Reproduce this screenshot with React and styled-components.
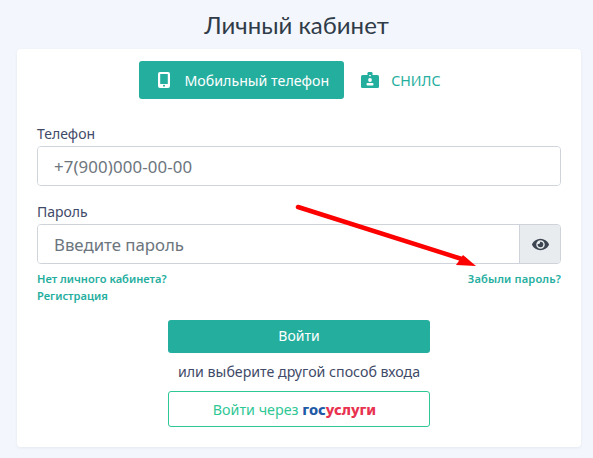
import React from "react";
import styled, { createGlobalStyle } from "styled-components";
import { FaEye } from "react-icons/fa";

const GlobalStyle = createGlobalStyle`
  html, body {
    margin: 0;
    padding: 0;
    background: #f3f6fc;
    font-family: "Noto Sans", "Open Sans", sans-serif;
  }
`;

const Page = styled.div`
  position: relative;
  width: 593px;
  height: 458px;
  overflow: hidden;
  padding: 0 12px 0 17px;
  box-sizing: border-box;
`;

const Title = styled.h1`
  margin: 0;
  height: 49px;
  padding-right: 5px;
  line-height: 49px;
  text-align: center;
  font-family: Lato, sans-serif;
  font-size: 24px;
  font-weight: 400;
  color: #2f3b48;
`;

const Card = styled.div`
  height: 398px;
  background: #fff;
  border-radius: 4px;
  box-shadow: 0 1px 3px rgba(60, 80, 120, 0.08);
  padding: 12px 20px 0;
  box-sizing: border-box;
`;

const Tabs = styled.div`
  display: flex;
  justify-content: center;
  margin-bottom: 25px;
`;

const Tab = styled.div`
  display: flex;
  align-items: center;
  height: 38px;
  padding: ${(p) => (p.$active ? "0 15px 0 19px" : "0 19px 0 17px")};
  gap: ${(p) => (p.$active ? "15px" : "12px")};
  border-radius: 3px;
  font-size: 14.2px;
  background: ${(p) => (p.$active ? "#24ae9e" : "transparent")};
  color: ${(p) => (p.$active ? "#fff" : "#24ae9e")};
`;

const Field = styled.div`
  margin-bottom: 16px;
`;

const Label = styled.div`
  font-size: 14px;
  line-height: 20px;
  margin-bottom: 2px;
  color: #3f4a68;
`;

const InputRow = styled.div`
  display: flex;
  height: 40px;
  border: 1px solid #ced4da;
  border-radius: 4px;
  box-sizing: border-box;
  overflow: hidden;
`;

const Input = styled.input`
  flex: 1;
  min-width: 0;
  border: 0;
  outline: 0;
  padding: 0 16px;
  font: 400 16.8px "Noto Sans", sans-serif;
  letter-spacing: ${(p) => (p.$phone ? "0.13px" : "0")};
  color: #6c757d;
  &::placeholder {
    color: #6c757d;
    opacity: 1;
  }
`;

const Addon = styled.div`
  width: 40px;
  display: flex;
  align-items: center;
  justify-content: center;
  background: #e9ecef;
  border-left: 1px solid #ced4da;
  color: #3d4650;
  font-size: 17px;
`;

const LinksRow = styled.div`
  display: flex;
  justify-content: space-between;
  margin-top: -8px;
`;

const Links = styled.div`
  display: flex;
  flex-direction: column;
  gap: 3px;
`;

const SmallLink = styled.a`
  font-size: 11.1px;
  font-weight: 600;
  line-height: 14px;
  letter-spacing: ${(p) => (p.$wide ? "0.15px" : "0")};
  color: #24ae9e;
`;

const Actions = styled.div`
  display: flex;
  flex-direction: column;
  align-items: center;
  margin-top: 17px;
`;

const Primary = styled.button`
  width: 262px;
  height: 33px;
  padding: 0 0 2px;
  border: 0;
  border-radius: 3px;
  background: #24ae9e;
  color: #fff;
  font: 400 14px "Noto Sans", sans-serif;
`;

const Or = styled.div`
  font-size: 14.2px;
  line-height: 20px;
  margin: 9px 0;
  color: #3f4a68;
`;

const Outline = styled.button`
  width: 262px;
  height: 36px;
  padding: 0 9px 0 0;
  border: 1px solid #2fc795;
  border-radius: 3px;
  background: #fff;
  color: #2fc795;
  font: 400 14.3px "Noto Sans", sans-serif;
`;

const GosBlue = styled.b`
  color: #1f5aa6;
  font-size: 14.6px;
  font-weight: 800;
`;

const GosRed = styled.b`
  color: #e8324f;
  font-size: 14.6px;
  font-weight: 800;
`;

const Arrow = styled.svg`
  position: absolute;
  left: 0;
  top: 0;
  pointer-events: none;
`;

function PhoneIcon() {
  return (
    <svg width="12" height="16" viewBox="0 0 12 16">
      <path
        fillRule="evenodd"
        fill="currentColor"
        d="M2 0h8a2 2 0 0 1 2 2v12a2 2 0 0 1-2 2H2a2 2 0 0 1-2-2V2a2 2 0 0 1 2-2zM2.2 2v10h7.6V2zM6 12.8a1 1 0 1 0 0 2a1 1 0 0 0 0-2z"
      />
    </svg>
  );
}

function BadgeIcon() {
  return (
    <svg width="18" height="16" viewBox="0 0 18 16">
      <rect y="3" width="18" height="13" rx="1.5" fill="currentColor" />
      <rect x="6.5" y="0" width="5" height="5.5" rx="1.2" fill="currentColor" />
      <rect x="8" y="3.2" width="2" height="1" fill="#fff" />
      <circle cx="9" cy="8" r="1.9" fill="#fff" />
      <rect x="5.5" y="11" width="7" height="2.6" rx="1" fill="#fff" />
    </svg>
  );
}

export default function App() {
  return (
    <Page>
      <GlobalStyle />
      <Title>Личный кабинет</Title>
      <Card>
        <Tabs>
          <Tab $active>
            <PhoneIcon />
            Мобильный телефон
          </Tab>
          <Tab>
            <BadgeIcon />
            СНИЛС
          </Tab>
        </Tabs>
        <Field>
          <Label>Телефон</Label>
          <InputRow>
            <Input $phone placeholder="+7(900)000-00-00" />
          </InputRow>
        </Field>
        <Field>
          <Label>Пароль</Label>
          <InputRow>
            <Input placeholder="Введите пароль" />
            <Addon>
              <FaEye />
            </Addon>
          </InputRow>
        </Field>
        <LinksRow>
          <Links>
            <SmallLink>Нет личного кабинета?</SmallLink>
            <SmallLink>Регистрация</SmallLink>
          </Links>
          <SmallLink $wide>Забыли пароль?</SmallLink>
        </LinksRow>
        <Actions>
          <Primary>Войти</Primary>
          <Or>или выберите другой способ входа</Or>
          <Outline>
            Войти через <GosBlue>гос</GosBlue>
            <GosRed>услуги</GosRed>
          </Outline>
        </Actions>
      </Card>
      <Arrow width="593" height="458" viewBox="0 0 593 458">
        <path d="M298 207L465 260" stroke="#fd0000" strokeWidth="4.5" strokeLinecap="round" />
        <path d="M476 266L456 265L463 255Z" fill="#fd0000" />
      </Arrow>
    </Page>
  );
}
